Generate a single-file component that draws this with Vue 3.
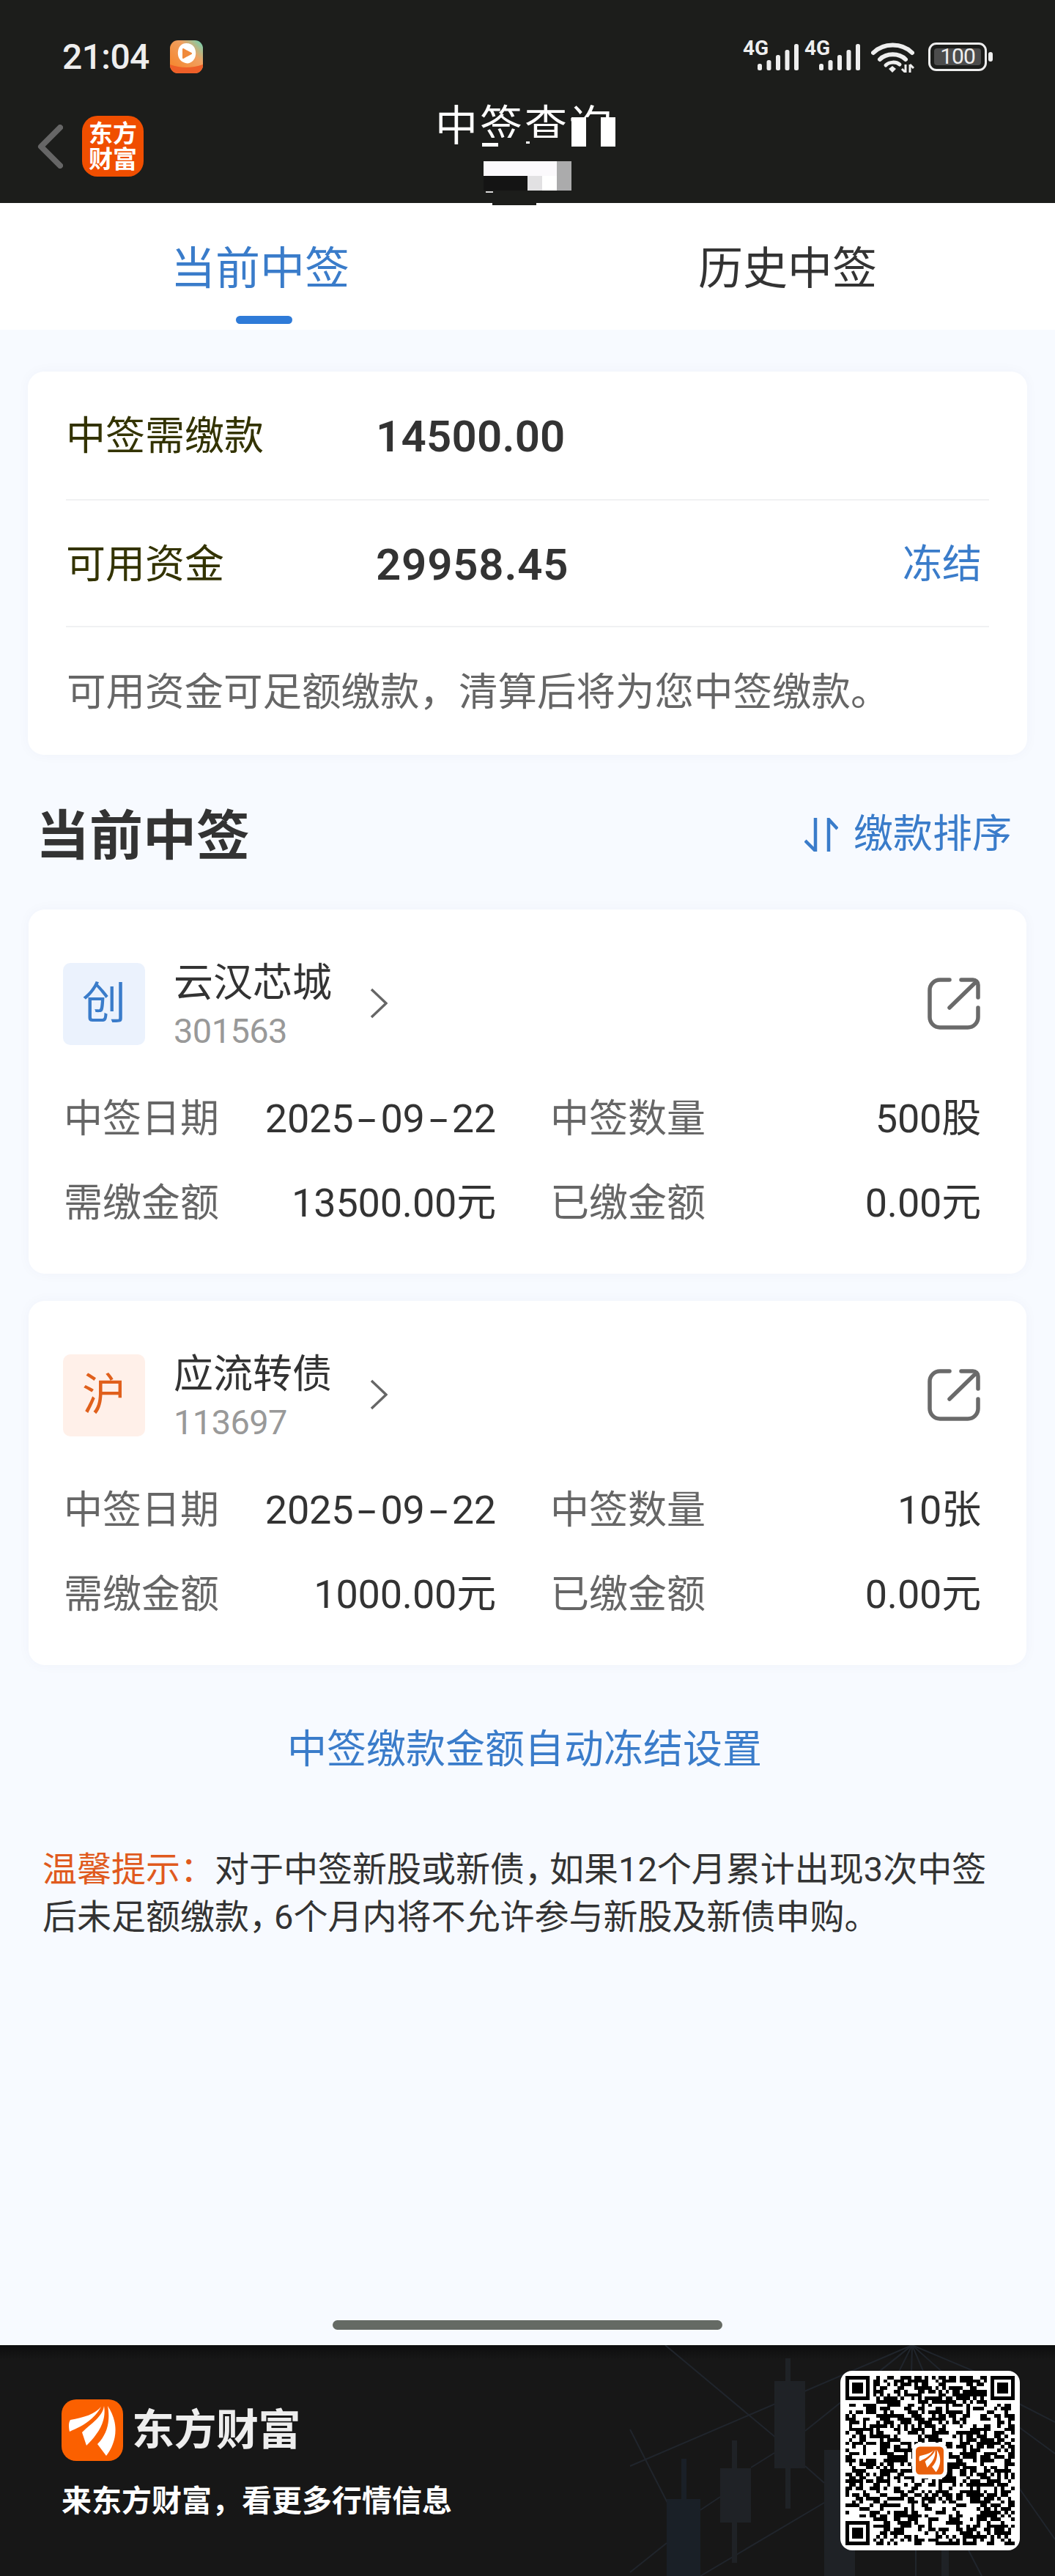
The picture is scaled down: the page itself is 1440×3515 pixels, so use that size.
<script setup>
import { computed } from 'vue'

const tabs = [
  { label: '当前中签', active: true },
  { label: '历史中签', active: false },
]

const stocks = [
  {
    market: '创', tone: 'blue', name: '云汉芯城', code: '301563',
    date: ['2025', '09', '22'], count: '500股', due: '13500.00元', paid: '0.00元',
  },
  {
    market: '沪', tone: 'orange', name: '应流转债', code: '113697',
    date: ['2025', '09', '22'], count: '10张', due: '1000.00元', paid: '0.00元',
  },
]

const blades = [
  'M54 10C46 20 30 25 12 28C9 32 10 40 11 44C26 37 43 30 54 10Z',
  'M58 9C56 24 40 33 28 45L34 63C47 50 62 32 58 9Z',
  'M63 9C66 25 65 45 49 61L61 77C73 62 81 36 63 9Z',
]

const signalBars = [
  { x: 0, h: 9 }, { x: 12.5, h: 14 }, { x: 25, h: 21 }, { x: 37.5, h: 28 }, { x: 50, h: 36 },
]

// Candles and fan lines behind the footer, in footer coordinates
const candles = [
  { x: 910, y: 210, w: 46, h: 105, c: '#1a2027' }, { x: 930, y: 155, w: 7, h: 60, c: '#1a2027' },
  { x: 983, y: 168, w: 42, h: 74, c: '#1f2226' }, { x: 999, y: 130, w: 7, h: 167, c: '#1f2226' },
  { x: 1057, y: 49, w: 42, h: 119, c: '#1f2226' }, { x: 1072, y: 18, w: 7, h: 205, c: '#1f2226' },
  { x: 1125, y: 143, w: 42, h: 172, c: '#1f2226' }, { x: 1285, y: 280, w: 10, h: 35, c: '#1f2226' },
]
const rays = [
  'M908 0L1060 127', 'M860 165L1245 0', 'M860 115L912 217', 'M860 310L910 270',
  'M956 315L1125 215', 'M1099 117L1245 0', 'M956 225L983 207', 'M1025 167L1057 147',
  'M1099 165L1125 188', 'M1245 0L1195 40', 'M1245 0L1225 40', 'M1245 0L1244 40',
  'M1245 0L1262 40', 'M1245 0L1290 40', 'M1245 0L1340 40', 'M1391 80L1440 105',
  'M1391 112L1440 148', 'M1391 195L1440 265', 'M1250 280L1250 315', 'M1322 280L1340 315',
]

// Seeded module grid for the download code
const QR_SIZE = 49
function inFinder(r, c) {
  const near = (v) => v < 8
  const far = (v) => v >= QR_SIZE - 8
  return (near(r) && near(c)) || (near(r) && far(c)) || (far(r) && near(c))
}
const qrModules = computed(() => {
  const cells = []
  let seed = 20250922
  for (let r = 0; r < QR_SIZE; r++) {
    for (let c = 0; c < QR_SIZE; c++) {
      seed = (seed * 1664525 + 1013904223) >>> 0
      const on = (seed >>> 16) % 100 < 52
      if (!inFinder(r, c) && on) cells.push({ x: c, y: r })
    }
  }
  return cells
})
const finders = [
  { x: 0, y: 0 }, { x: 42, y: 0 }, { x: 0, y: 42 },
]
</script>

<template>
  <div class="screen">
    <header class="topbar">
      <div class="status">
        <div class="status-left">
          <span class="time">21:04</span>
          <svg class="app-icon" viewBox="0 0 45 45">
            <defs>
              <linearGradient id="appGrad" x1="0" y1="1" x2="1" y2="0">
                <stop offset="0.2" stop-color="#f58a35" />
                <stop offset="0.65" stop-color="#f0a060" />
                <stop offset="1" stop-color="#63d8bb" />
              </linearGradient>
            </defs>
            <rect width="45" height="45" rx="11" fill="url(#appGrad)" />
            <path d="M0 33Q22 41 45 33V34A11 11 0 0 1 34 45H11A11 11 0 0 1 0 34Z" fill="#ee5f28" />
            <path d="M22 4C33 4 36 13 35 20C34 28 27 33 21 31C13 29 10 22 11 15C12 8 16 4 22 4Z" fill="#fff" />
            <path d="M18 12L29 18L18 24Z" fill="#f08a3c" stroke="#f08a3c" stroke-width="2" stroke-linejoin="round" />
          </svg>
        </div>
        <div class="status-right">
          <div v-for="n in 2" :key="n" class="signal">
            <span class="net">4G</span>
            <svg class="bars" viewBox="0 0 56 36">
              <rect v-for="b in signalBars" :key="b.x" :x="b.x" :y="36 - b.h" width="6" :height="b.h" rx="2.5" fill="#eeeeee" />
            </svg>
          </div>
          <svg class="wifi" viewBox="0 0 59 43" fill="none">
            <path d="M3 16C17 2 42 2 56 16" stroke="#eee" stroke-width="6" stroke-linecap="round" />
            <path d="M12 25C21 16 38 16 47 25" stroke="#eee" stroke-width="6" stroke-linecap="round" />
            <path d="M20 33C25 28 34 28 39 32" stroke="#eee" stroke-width="5" stroke-linecap="round" />
            <path d="M24 38L29 34L34 38L29 43Z" fill="#eee" />
            <path d="M47 32V43M47 43L42 38M53 43V32M53 32L58 37" stroke="#eee" stroke-width="3" />
          </svg>
          <div class="battery">
            <div class="cell"><span class="charge">100</span></div>
            <span class="nub"></span>
          </div>
        </div>
      </div>

      <div class="navbar">
        <div class="nav-left">
          <svg class="back" viewBox="0 0 35 60" fill="none">
            <path d="M31 4L5 30L31 56" stroke="#666" stroke-width="8" stroke-linecap="round" stroke-linejoin="round" />
          </svg>
          <div class="brand-tile"><span>东方</span><span>财富</span></div>
        </div>
        <h1 class="title">中签查询</h1>
      </div>

      <!-- Mosaic laid over the account line and the tail of the title -->
      <div class="mosaic" aria-hidden="true">
        <i class="m" style="left:52px;top:28px;width:128px;height:32px;background:#1c1d1b"></i>
        <i class="m" style="left:58px;top:35px;width:22px;height:5px;background:#fff"></i>
        <i class="m" style="left:118px;top:33px;width:5px;height:3px;background:#fff"></i>
        <i class="m" style="left:180px;top:0;width:20px;height:40px;background:#fff"></i>
        <i class="m" style="left:200px;top:0;width:20px;height:40px;background:#1c1d1b"></i>
        <i class="m" style="left:220px;top:0;width:20px;height:40px;background:#fff"></i>
        <i class="m" style="left:60px;top:60px;width:100px;height:20px;background:#fbf9fc"></i>
        <i class="m" style="left:160px;top:60px;width:20px;height:40px;background:#ababac"></i>
        <i class="m" style="left:120px;top:80px;width:20px;height:20px;background:#e2e1e3"></i>
        <i class="m" style="left:140px;top:80px;width:20px;height:20px;background:#fff"></i>
        <i class="m" style="left:60px;top:80px;width:60px;height:20px;background:#141414"></i>
        <i class="m" style="left:63px;top:101px;width:10px;height:2px;background:#d8d8d8"></i>
        <i class="m" style="left:72px;top:117px;width:60px;height:3px;background:#1c1d1b"></i>
      </div>
    </header>

    <nav class="tabs">
      <div v-for="t in tabs" :key="t.label" class="tab" :class="{ active: t.active }">
        <span class="tab-label">{{ t.label }}</span>
        <span class="tab-line"></span>
      </div>
    </nav>

    <main class="content">
      <section class="card summary">
        <div class="sum-row first">
          <span class="sum-label">中签需缴款</span>
          <span class="sum-value">14500.00</span>
        </div>
        <div class="sum-row second">
          <span class="sum-label">可用资金</span>
          <span class="sum-value wide">29958.45</span>
          <span class="freeze">冻结</span>
        </div>
        <p class="sum-note">可用资金可足额缴款，清算后将为您中签缴款。</p>
      </section>

      <div class="section-head">
        <h2 class="section-title">当前中签</h2>
        <div class="sort">
          <svg class="sort-icon" viewBox="0 0 46 46" fill="none">
            <path d="M15 0V45L1 31" stroke="#3a7cca" stroke-width="4.5" />
            <path d="M33 46V2L45 15" stroke="#3a7cca" stroke-width="4.5" />
          </svg>
          <span>缴款排序</span>
        </div>
      </div>

      <article v-for="s in stocks" :key="s.code" class="card stock">
        <div class="stock-top">
          <div class="market" :class="s.tone">{{ s.market }}</div>
          <div class="stock-id">
            <div class="stock-name">{{ s.name }}</div>
            <div class="stock-code">{{ s.code }}</div>
          </div>
          <svg class="chevron" viewBox="0 0 24 42" fill="none">
            <path d="M2 2L22 21L2 40" stroke="#666" stroke-width="3.5" />
          </svg>
          <svg class="share" viewBox="0 0 72 71" fill="none">
            <path d="M30 3H17A14 14 0 0 0 3 17V54A14 14 0 0 0 17 68H55A14 14 0 0 0 69 54V41" stroke="#6a6a6a" stroke-width="5.5" stroke-linecap="round" />
            <path d="M46 3H62A7 7 0 0 1 69 10V27M30 41L66 6" stroke="#6a6a6a" stroke-width="5.5" stroke-linecap="round" />
          </svg>
        </div>
        <div class="stock-grid">
          <div class="pair">
            <span class="k">中签日期</span>
            <span class="v">
              <template v-for="(part, i) in s.date" :key="i"><span v-if="i" class="dash">-</span>{{ part }}</template>
            </span>
          </div>
          <div class="pair">
            <span class="k">中签数量</span>
            <span class="v">{{ s.count }}</span>
          </div>
          <div class="pair">
            <span class="k">需缴金额</span>
            <span class="v">{{ s.due }}</span>
          </div>
          <div class="pair">
            <span class="k">已缴金额</span>
            <span class="v">{{ s.paid }}</span>
          </div>
        </div>
      </article>

      <a class="auto-link">中签缴款金额自动冻结设置</a>

      <p class="tip">
        <span class="tip-line"><span class="tip-mark">温馨提示：</span>对于中签新股或新债<span class="narrow">，</span>如果12个月累计出现3次中签</span>
        <span class="tip-line">后未足额缴款<span class="narrow">，</span>6个月内将不允许参与新股及新债申购。</span>
      </p>

      <div class="home-bar"></div>
    </main>

    <footer class="promo">
      <svg class="chart" viewBox="0 0 1440 315" aria-hidden="true">
        <path v-for="r in rays" :key="r" :d="r" stroke="#20252c" stroke-width="2" fill="none" />
        <rect v-for="(k, i) in candles" :key="i" :x="k.x" :y="k.y" :width="k.w" :height="k.h" :fill="k.c" />
      </svg>
      <div class="promo-text">
        <div class="wordmark">
          <svg class="mark" viewBox="0 0 84 84">
            <rect width="84" height="84" rx="20" fill="#fb6000" />
            <path v-for="d in blades" :key="d" :d="d" fill="#fff" />
          </svg>
          <span class="word">东方财富</span>
        </div>
        <div class="slogan">来东方财富，看更多行情信息</div>
      </div>
      <div class="qr">
        <svg class="qr-grid" viewBox="0 0 49 49" shape-rendering="crispEdges">
          <rect v-for="(m, i) in qrModules" :key="i" :x="m.x" :y="m.y" width="1" height="1" fill="#000" />
          <g v-for="f in finders" :key="f.x + '-' + f.y">
            <rect :x="f.x" :y="f.y" width="7" height="7" fill="#000" />
            <rect :x="f.x + 1" :y="f.y + 1" width="5" height="5" fill="#fff" />
            <rect :x="f.x + 2" :y="f.y + 2" width="3" height="3" fill="#000" />
          </g>
        </svg>
        <div class="qr-badge">
          <svg viewBox="0 0 84 84">
            <rect width="84" height="84" rx="12" fill="#e8600c" />
            <path v-for="d in blades" :key="d" :d="d" fill="#fff" />
          </svg>
        </div>
      </div>
    </footer>
  </div>
</template>

<style>
html, body { margin: 0; padding: 0; background: #f7faff; }
</style>

<style scoped>
.screen {
  width: 1440px;
  height: 3515px;
  display: flex;
  flex-direction: column;
  background: #f7faff;
  font-family: Roboto, "Noto Sans CJK SC", sans-serif;
  color: #333;
  overflow: hidden;
}

/* top bar */
.topbar {
  position: relative;
  height: 277px;
  flex: none;
  box-sizing: border-box;
  padding-top: 55px;
  background: #1c1d1b;
}
.status {
  height: 45px;
  display: flex;
  justify-content: space-between;
  align-items: center;
  padding: 0 85px;
}
.status-left { display: flex; align-items: center; gap: 28px; }
.time { font-size: 48px; font-weight: 500; color: #eeeeee; line-height: 45px; letter-spacing: -0.6px; }
.app-icon { width: 45px; height: 45px; display: block; }
.status-right { display: flex; align-items: flex-start; }
.signal { position: relative; width: 76px; height: 40px; margin-right: 8px; }
.net {
  position: absolute; left: 0; top: -4px;
  font-size: 28px; line-height: 28px; font-weight: 700; color: #eee;
}
.bars { position: absolute; left: 20px; top: 4px; width: 56px; height: 36px; display: block; }
.wifi { width: 59px; height: 43px; margin-left: 7px; display: block; }
.battery { display: flex; align-items: center; margin-left: 19px; margin-top: 2px; }
.cell {
  box-sizing: border-box;
  width: 80px; height: 39px;
  border: 3.5px solid #eee;
  border-radius: 11px;
  padding: 5px;
  display: flex;
}
.charge {
  flex: 1;
  background: #4c4c4c;
  border-radius: 4px;
  color: #eee;
  font-size: 30px;
  line-height: 22px;
  font-weight: 400;
  text-align: center;
  letter-spacing: -1px;
}
.nub { width: 6px; height: 13px; margin-left: 2px; border-radius: 3px; background: #eee; }

.navbar {
  position: relative;
  margin-top: 58px;
  height: 83px;
  display: flex;
  align-items: center;
  padding-left: 51px;
}
.nav-left { display: flex; align-items: center; gap: 26px; }
.back { width: 35px; height: 60px; display: block; }
.brand-tile {
  width: 84px; height: 83px;
  border-radius: 21px;
  background: #f04e00;
  color: #fff;
  display: flex;
  flex-direction: column;
  align-items: center;
  justify-content: center;
  font-size: 33px;
  line-height: 35px;
  font-weight: 700;
}
.title {
  position: absolute;
  left: 594px;
  top: -21px;
  margin: 0;
  font-size: 58px;
  line-height: 70px;
  height: 63px;
  overflow: hidden;
  font-weight: 400;
  letter-spacing: 3px;
  color: #fff;
  white-space: nowrap;
}
.mosaic { position: absolute; left: 600px; top: 160px; width: 260px; height: 120px; }
.m { position: absolute; display: block; }

/* tabs */
.tabs { height: 173px; flex: none; display: flex; background: #fff; }
.tab { flex: 1; display: flex; flex-direction: column; align-items: center; }
.tab-label {
  margin-top: 55px;
  margin-right: 10px;
  font-size: 61px;
  line-height: 70px;
  color: #333;
}
.tab-line { margin-top: 29px; width: 77px; height: 11px; border-radius: 6px; background: transparent; }
.active .tab-label { color: #3a7cca; }
.active .tab-line { background: #2f7bd8; }

/* main column */
.content {
  flex: 1;
  display: flex;
  flex-direction: column;
  box-sizing: border-box;
  padding: 57px 38px 0;
  min-height: 0;
}
.card {
  background: #fff;
  border-radius: 22px;
  box-shadow: 0 0 18px rgba(60, 70, 110, 0.035);
}
.summary { height: 523px; box-sizing: border-box; padding: 0 52px; flex: none; }
.sum-row {
  box-sizing: border-box;
  border-bottom: 2px solid #f0f1f3;
  display: flex;
  align-items: center;
  padding: 4px 10px 0 0;
}
.sum-row.first { height: 176px; }
.sum-row.second { height: 173px; }
.sum-label { width: 423px; font-size: 54px; line-height: 64px; color: #333300; }
.sum-value { font-size: 60px; line-height: 64px; font-weight: 600; color: #333; letter-spacing: 0.2px; }
.sum-value.wide { letter-spacing: 0.8px; }
.freeze { margin-left: auto; font-size: 54px; line-height: 64px; color: #3a7cca; }
.sum-note { margin: 0; height: 174px; font-size: 53.5px; line-height: 178px; color: #666; white-space: nowrap; padding-left: 1px; }

.section-head {
  height: 211px;
  flex: none;
  display: flex;
  align-items: center;
  justify-content: space-between;
  padding: 7px 21px 0 11px;
  box-sizing: border-box;
}
.section-title { margin: 4px 0 0; font-size: 73px; line-height: 80px; font-weight: 700; color: #333; }
.sort { display: flex; align-items: center; gap: 21px; font-size: 54px; line-height: 64px; color: #3a7cca; }
.sort-icon { width: 46px; height: 46px; display: block; }

.stock { height: 497px; flex: none; box-sizing: border-box; padding: 73px 63px 0 47px; margin-left: 1px; margin-right: 1px; }
.stock + .stock { margin-top: 37px; }
.stock-top { display: flex; align-items: flex-start; height: 119px; }
.market {
  width: 112px; height: 112px;
  border-radius: 10px;
  display: flex; align-items: center; justify-content: center;
  font-size: 60px;
  line-height: 112px;
  flex: none;
}
.market.blue { background: #ebf2fd; color: #3a7cca; }
.market.orange { background: #fff0e9; color: #e0601c; }
.stock-id { margin-left: 39px; width: 268px; }
.stock-name { margin-top: 2px; font-size: 54px; line-height: 52px; color: #333; }
.stock-code { margin-top: 13px; font-size: 47px; line-height: 52px; color: #999; letter-spacing: -0.6px; }
.chevron { width: 24px; height: 42px; margin-left: 0; margin-top: 34px; display: block; flex: none; }
.share { width: 72px; height: 71px; margin-left: auto; margin-top: 20px; display: block; flex: none; }
.stock-grid {
  margin-top: 36px;
  display: grid;
  grid-template-columns: 591px 589px;
  grid-auto-rows: 115px;
  column-gap: 73px;
}
.pair { display: flex; align-items: center; justify-content: space-between; font-size: 53px; line-height: 64px; }
.k { color: #666; padding-left: 1px; }
.v { color: #333; white-space: nowrap; font-size: 54px; letter-spacing: -0.2px; }
.dash { display: inline-block; width: 37px; text-align: center; transform: scaleX(1.7); }

.auto-link {
  margin-top: 86px;
  padding-right: 8px;
  text-align: center;
  font-size: 54px;
  line-height: 60px;
  color: #3a7cca;
  flex: none;
}
.tip { margin: 101px 0 0 20px; font-size: 47px; line-height: 64.5px; color: #333; flex: none; }
.tip-line { display: block; white-space: nowrap; }
.tip-mark { color: #e05a1e; }
.narrow { letter-spacing: -13px; }
.home-bar {
  margin: auto 0 21px 416px;
  width: 532px;
  height: 13px;
  border-radius: 7px;
  background: #656a64;
  flex: none;
}

/* promo footer */
.promo {
  position: relative;
  height: 315px;
  flex: none;
  background: linear-gradient(#0d0d0e 0, #171717 20px);
  overflow: hidden;
}
.chart { position: absolute; left: 0; top: 0; width: 1440px; height: 315px; display: block; }
.promo-text { position: absolute; left: 84px; top: 74px; }
.wordmark { display: flex; align-items: center; gap: 12px; }
.mark { width: 84px; height: 84px; display: block; }
.word { font-size: 58px; line-height: 64px; font-weight: 700; color: #eee; letter-spacing: -0.5px; }
.slogan { margin-top: 30px; font-size: 41px; line-height: 50px; font-weight: 700; color: #fff; white-space: nowrap; }
.qr {
  position: absolute;
  left: 1147px;
  top: 35px;
  width: 245px;
  height: 245px;
  border-radius: 16px;
  background: #fff;
}
.qr-grid { position: absolute; left: 7px; top: 7px; width: 231px; height: 231px; display: block; }
.qr-badge {
  position: absolute;
  left: 98px;
  top: 98px;
  width: 48px;
  height: 49px;
  box-sizing: border-box;
  padding: 5px;
  border-radius: 10px;
  background: #fff;
}
.qr-badge svg { width: 100%; height: 100%; display: block; }
</style>
